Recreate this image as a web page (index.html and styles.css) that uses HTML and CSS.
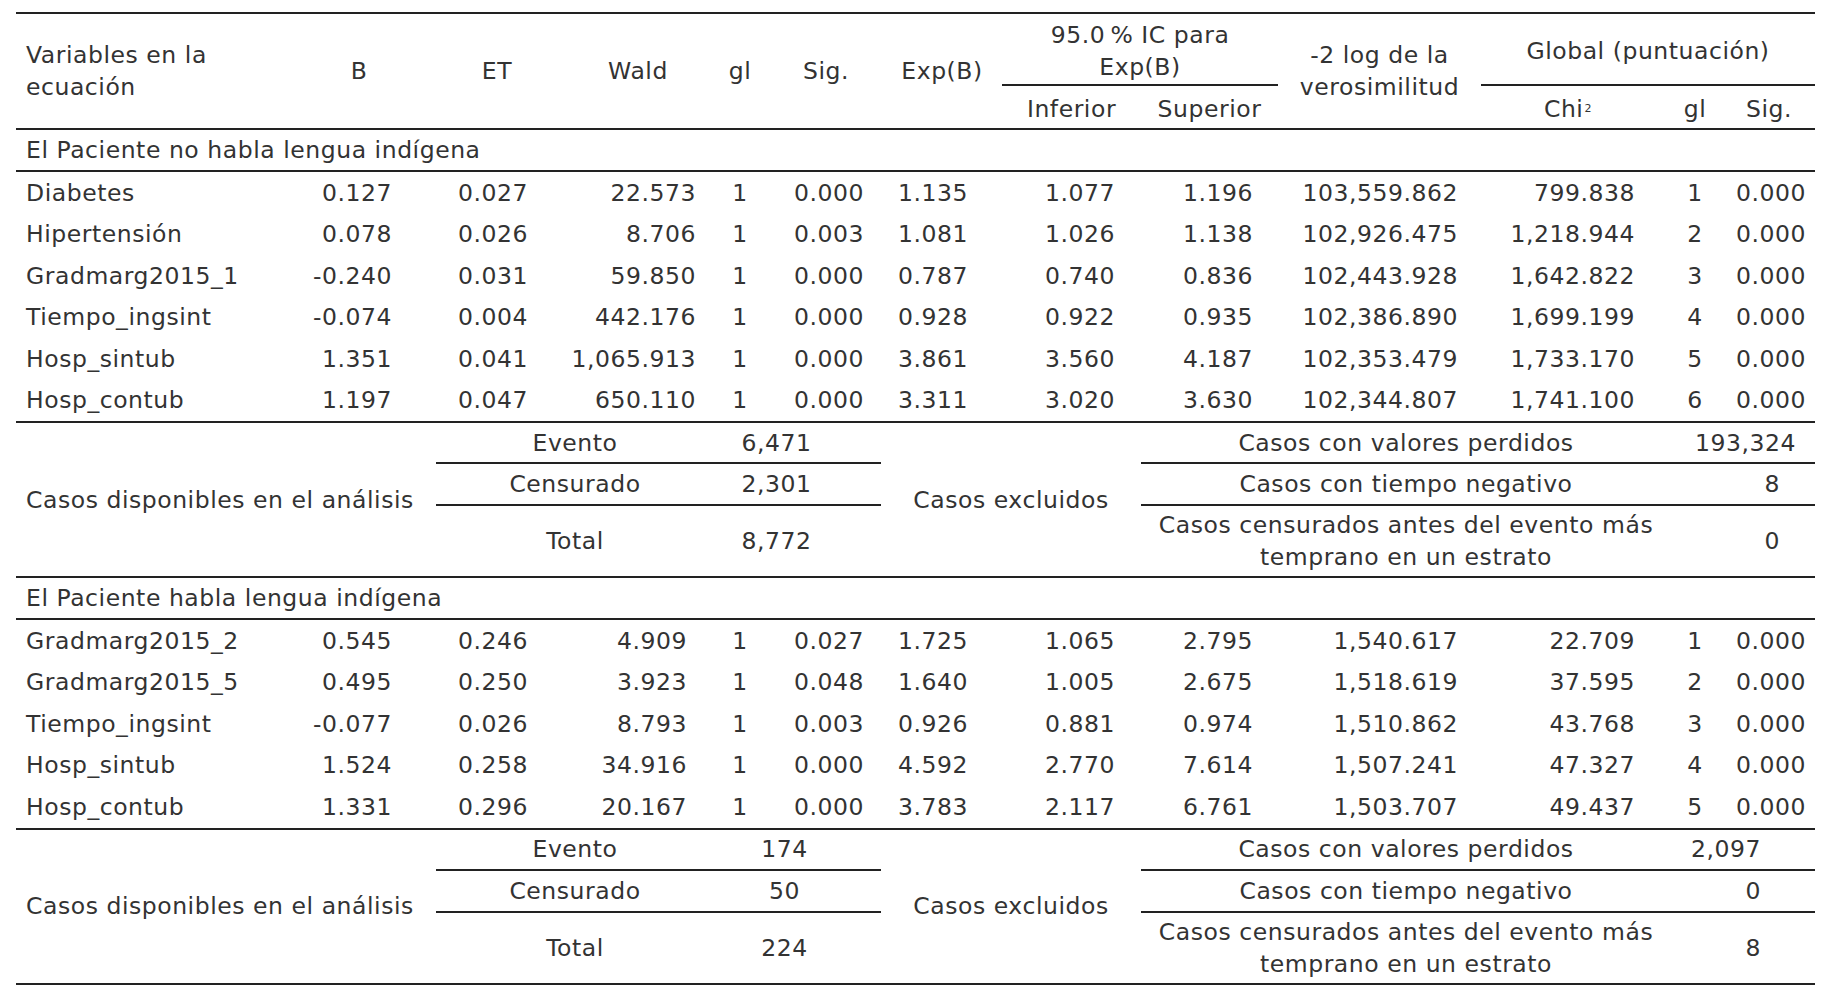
FILE: index.html
```html
<!DOCTYPE html>
<html lang="es">
<head>
<meta charset="utf-8">
<title>Variables en la ecuación</title>
<link rel="stylesheet" href="styles.css">
</head>
<body>
<div class="page">
  <div class="tbl">
    <div class="head">
      <div class="h h-var">Variables en la<br>ecuación</div>
      <div class="h h-full c2">B</div>
      <div class="h h-full c3">ET</div>
      <div class="h h-full c4">Wald</div>
      <div class="h h-full c5">gl</div>
      <div class="h h-full c6">Sig.</div>
      <div class="h h-full c7">Exp(B)</div>
      <div class="h h-group g-ic">95.0&#8239;% IC para<br>Exp(B)</div>
      <div class="h h-sub c8">Inferior</div>
      <div class="h h-sub c9">Superior</div>
      <div class="h h-full c10">-2 log de la<br>verosimilitud</div>
      <div class="h h-group g-glob">Global (puntuación)</div>
      <div class="h h-sub c11">Chi<sup class="sup">2</sup></div>
      <div class="h h-sub c12">gl</div>
      <div class="h h-sub c13">Sig.</div>
    </div>

    <div class="section">El Paciente no habla lengua indígena</div>
    <div class="rows">
      <div class="row"><span>Diabetes</span><span>0.127</span><span>0.027</span><span>22.573</span><span>1</span><span>0.000</span><span>1.135</span><span>1.077</span><span>1.196</span><span>103,559.862</span><span>799.838</span><span>1</span><span>0.000</span></div>
      <div class="row"><span>Hipertensión</span><span>0.078</span><span>0.026</span><span>8.706</span><span>1</span><span>0.003</span><span>1.081</span><span>1.026</span><span>1.138</span><span>102,926.475</span><span>1,218.944</span><span>2</span><span>0.000</span></div>
      <div class="row"><span>Gradmarg2015_1</span><span>-0.240</span><span>0.031</span><span>59.850</span><span>1</span><span>0.000</span><span>0.787</span><span>0.740</span><span>0.836</span><span>102,443.928</span><span>1,642.822</span><span>3</span><span>0.000</span></div>
      <div class="row"><span>Tiempo_ingsint</span><span>-0.074</span><span>0.004</span><span>442.176</span><span>1</span><span>0.000</span><span>0.928</span><span>0.922</span><span>0.935</span><span>102,386.890</span><span>1,699.199</span><span>4</span><span>0.000</span></div>
      <div class="row"><span>Hosp_sintub</span><span>1.351</span><span>0.041</span><span>1,065.913</span><span>1</span><span>0.000</span><span>3.861</span><span>3.560</span><span>4.187</span><span>102,353.479</span><span>1,733.170</span><span>5</span><span>0.000</span></div>
      <div class="row"><span>Hosp_contub</span><span>1.197</span><span>0.047</span><span>650.110</span><span>1</span><span>0.000</span><span>3.311</span><span>3.020</span><span>3.630</span><span>102,344.807</span><span>1,741.100</span><span>6</span><span>0.000</span></div>
    </div>

    <div class="summary s1">
      <div class="sm-label">Casos disponibles en el análisis</div>
      <div class="sm-sub r1 line">Evento</div>
      <div class="sm-val r1 line">6,471</div>
      <div class="sm-sub r2 line">Censurado</div>
      <div class="sm-val r2 line">2,301</div>
      <div class="sm-sub r3">Total</div>
      <div class="sm-val r3">8,772</div>
      <div class="sm-excl">Casos excluidos</div>
      <div class="sm-rlab r1 line">Casos con valores perdidos</div>
      <div class="sm-rval r1 line v-wide">193,324</div>
      <div class="sm-rlab r2 line">Casos con tiempo negativo</div>
      <div class="sm-rval r2 line">8</div>
      <div class="sm-rlab r3">Casos censurados antes del evento más<br>temprano en un estrato</div>
      <div class="sm-rval r3">0</div>
    </div>

    <div class="section">El Paciente habla lengua indígena</div>
    <div class="rows s2">
      <div class="row"><span>Gradmarg2015_2</span><span>0.545</span><span>0.246</span><span>4.909</span><span>1</span><span>0.027</span><span>1.725</span><span>1.065</span><span>2.795</span><span>1,540.617</span><span>22.709</span><span>1</span><span>0.000</span></div>
      <div class="row"><span>Gradmarg2015_5</span><span>0.495</span><span>0.250</span><span>3.923</span><span>1</span><span>0.048</span><span>1.640</span><span>1.005</span><span>2.675</span><span>1,518.619</span><span>37.595</span><span>2</span><span>0.000</span></div>
      <div class="row"><span>Tiempo_ingsint</span><span>-0.077</span><span>0.026</span><span>8.793</span><span>1</span><span>0.003</span><span>0.926</span><span>0.881</span><span>0.974</span><span>1,510.862</span><span>43.768</span><span>3</span><span>0.000</span></div>
      <div class="row"><span>Hosp_sintub</span><span>1.524</span><span>0.258</span><span>34.916</span><span>1</span><span>0.000</span><span>4.592</span><span>2.770</span><span>7.614</span><span>1,507.241</span><span>47.327</span><span>4</span><span>0.000</span></div>
      <div class="row"><span>Hosp_contub</span><span>1.331</span><span>0.296</span><span>20.167</span><span>1</span><span>0.000</span><span>3.783</span><span>2.117</span><span>6.761</span><span>1,503.707</span><span>49.437</span><span>5</span><span>0.000</span></div>
    </div>

    <div class="summary s2">
      <div class="sm-label">Casos disponibles en el análisis</div>
      <div class="sm-sub r1 line">Evento</div>
      <div class="sm-val r1 line">174</div>
      <div class="sm-sub r2 line">Censurado</div>
      <div class="sm-val r2 line">50</div>
      <div class="sm-sub r3">Total</div>
      <div class="sm-val r3">224</div>
      <div class="sm-excl">Casos excluidos</div>
      <div class="sm-rlab r1 line">Casos con valores perdidos</div>
      <div class="sm-rval r1 line">2,097</div>
      <div class="sm-rlab r2 line">Casos con tiempo negativo</div>
      <div class="sm-rval r2 line">0</div>
      <div class="sm-rlab r3">Casos censurados antes del evento más<br>temprano en un estrato</div>
      <div class="sm-rval r3">8</div>
    </div>
  </div>
</div>
</body>
</html>
```

FILE: styles.css
```css
* { box-sizing: border-box; }

html, body {
  margin: 0;
  padding: 0;
  background: #ffffff;
}

body {
  font-family: "DejaVu Sans", Verdana, sans-serif;
  font-size: 23.5px;
  color: #333333;
  letter-spacing: 0.55px;
}

.page {
  padding: 12px 17px 0 16px;
}

.tbl {
  width: 1799px;
  --cols: 274px 138px 138px 144px 60px 112px 120px 139px 137px 203px 174px 80px 80px;
  --line: 2px solid #222222;
}

/* ---------- header ---------- */
.head {
  display: grid;
  grid-template-columns: var(--cols);
  grid-template-rows: 72px 42px;
  border-top: var(--line);
  border-bottom: var(--line);
}

.h {
  display: flex;
  align-items: center;
  justify-content: center;
  text-align: center;
  line-height: 32px;
}

.h-var {
  grid-column: 1;
  grid-row: 1 / 3;
  justify-content: flex-start;
  text-align: left;
  padding-left: 10px;
}

.h-full { grid-row: 1 / 3; }
.c2 { grid-column: 2; }
.c3 { grid-column: 3; }
.c4 { grid-column: 4; }
.c5 { grid-column: 5; }
.c6 { grid-column: 6; }
.c7 { grid-column: 7; }
.c8 { grid-column: 8; }
.c9 { grid-column: 9; }
.c10 { grid-column: 10; }
.c11 { grid-column: 11; }
.c12 { grid-column: 12; }
.c13 { grid-column: 13; padding-right: 12px; }

.h-group {
  grid-row: 1;
  border-bottom: var(--line);
  padding-top: 4px;
}
.g-ic { grid-column: 8 / 10; }
.g-glob { grid-column: 11 / 14; }

.h-sub {
  grid-row: 2;
  padding-top: 3px;
}

.sup {
  font-size: 11px;
  line-height: 0;
  vertical-align: 18px;
  margin-left: 1px;
}

/* ---------- section labels ---------- */
.section {
  height: 42px;
  display: flex;
  align-items: center;
  padding-left: 10px;
  border-bottom: var(--line);
}

/* ---------- data rows ---------- */
.rows {
  border-bottom: var(--line);
}

.row {
  display: grid;
  grid-template-columns: var(--cols);
  height: 41.5px;
  align-items: center;
}

.row > span {
  text-align: right;
  white-space: nowrap;
}

.row > :nth-child(1) { text-align: left; padding-left: 10px; }
.row > :nth-child(2) { padding-right: 36px; }
.row > :nth-child(3) { padding-right: 38px; }
.row > :nth-child(4) { padding-right: 14px; }
.row > :nth-child(5) { text-align: center; }
.row > :nth-child(6) { padding-right: 18px; }
.row > :nth-child(7) { padding-right: 34px; }
.row > :nth-child(8) { padding-right: 26px; }
.row > :nth-child(9) { padding-right: 25px; }
.row > :nth-child(10) { padding-right: 23px; }
.row > :nth-child(11) { padding-right: 20px; }
.row > :nth-child(12) { text-align: center; }
.row > :nth-child(13) { padding-right: 9px; }

.s2 .row > :nth-child(4) { padding-right: 23px; }

/* ---------- summary blocks ---------- */
.summary {
  display: grid;
  grid-template-columns: 420px 278px 167px 260px 530px 144px;
  grid-template-rows: 41px 42px 70px;
  border-bottom: var(--line);
}

.summary > div {
  display: flex;
  align-items: center;
  line-height: 32px;
  white-space: nowrap;
}

.line { border-bottom: var(--line); }

.r1 { grid-row: 1; }
.r2 { grid-row: 2; }
.r3 { grid-row: 3; }

.sm-label {
  grid-column: 1;
  grid-row: 1 / 4;
  padding-left: 10px;
}

.sm-sub {
  grid-column: 2;
  justify-content: center;
}

.sm-val {
  grid-column: 3;
  justify-content: center;
  padding-right: 42px;
}

.s2 .sm-val { padding-right: 26px; }

.sm-excl {
  grid-column: 4;
  grid-row: 1 / 4;
  justify-content: center;
}

.sm-rlab {
  grid-column: 5;
  justify-content: center;
  text-align: center;
}

.sm-rval {
  grid-column: 6;
  justify-content: flex-end;
  padding-right: 35px;
}

.sm-rval.v-wide { padding-right: 19px; }

.s2 .sm-rval { padding-right: 54px; }
```
